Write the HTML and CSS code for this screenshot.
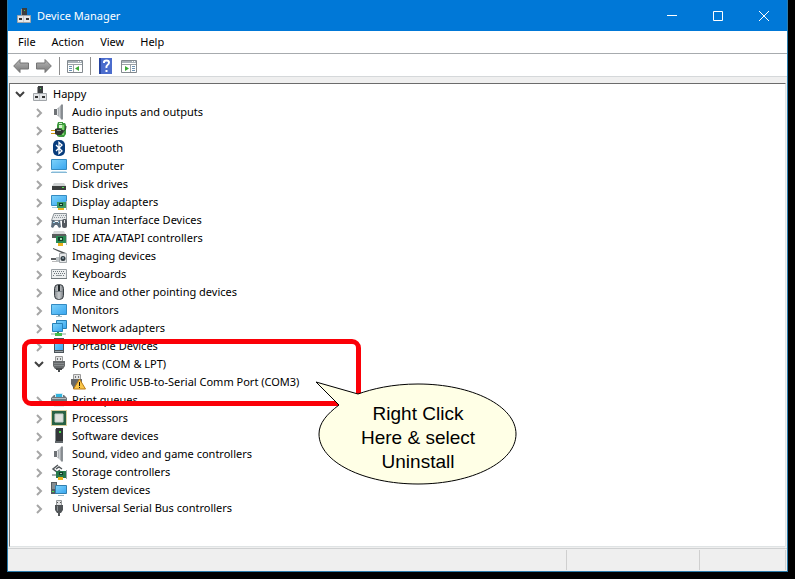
FILE: index.html
```html
<!DOCTYPE html>
<html lang="en">
<head>
<meta charset="utf-8">
<title>Device Manager</title>
<link rel="stylesheet" href="styles.css">
</head>
<body>
<svg class="sprite" aria-hidden="true">
  <defs>
    <linearGradient id="blue" x1="0" y1="0" x2="1" y2="1"><stop offset="0" stop-color="#7fd3fa"/><stop offset="1" stop-color="#37a5f0"/></linearGradient>
    <linearGradient id="metal" x1="0" y1="0" x2="1" y2="0"><stop offset="0" stop-color="#85898d"/><stop offset=".5" stop-color="#c9cdd0"/><stop offset="1" stop-color="#777b80"/></linearGradient>
    <linearGradient id="arrow" x1="0" y1="0" x2="0" y2="1"><stop offset="0" stop-color="#b9b9b9"/><stop offset="1" stop-color="#777"/></linearGradient>
  </defs>
  <symbol id="root" viewBox="0 0 16 16"><path d="M6 0h5v8H6z" fill="#3b3e40"/><path d="M8 2h1v1H8z" fill="#44d04a"/><path d="M5 1h1v7H5z" fill="#999"/><path d="M1.500 7.500h13v7h-13z" fill="#e4e6e8" stroke="#a0a4a8"/><path d="M3 10h3v2H3zM10 10h3v2h-3z" fill="#333"/><path d="M7 8h1v6H7z" fill="#c4c8cb"/></symbol>
  <symbol id="down" viewBox="0 0 16 16"><path d="M4 6l4 4 4-4" fill="none" stroke="#404040" stroke-width="2"/></symbol>
  <symbol id="right" viewBox="0 0 16 16"><path d="M6 5l4 4-4 4" fill="none" stroke="#a6a6a6" stroke-width="2"/></symbol>
  <symbol id="speaker" viewBox="0 0 16 16"><path d="M3 5h3v6H3z" fill="#6e7276"/><path d="M6 5l5-5v16l-5-5z" fill="url(#metal)"/><path d="M11 0l1 1v14l-1 1z" fill="#8b9196"/><path d="M6 5h1v6H6z" fill="#e3e5e7"/></symbol>
  <symbol id="battery" viewBox="0 0 16 16"><path d="M7 0h5v1h2l1 2v9l-2 3H8l-2-1V3z" fill="#3d9a3d"/><path d="M8 1h3v1H8zM8 3h5v3H8z" fill="#d6f0cf"/><path d="M11 3h2v10h-2z" fill="#7bd56b"/><path d="M0 8h5v1H0zM0 11h5v1H0z" fill="#d0980f"/><path d="M4 7l3-1 5 2 1 2-3 3H6l-2-1z" fill="#303531"/><path d="M6 8h4v1H6z" fill="#8d948e"/><path d="M12 9q3 0 3-5" fill="none" stroke="#303531"/></symbol>
  <symbol id="bluetooth" viewBox="0 0 16 16"><rect x="2" width="12" height="16" rx="5" fill="#083c7c"/><path d="M5 5l6 6-3 2.500v-11L11 5l-6 6" fill="none" stroke="#fff" stroke-width="1.300"/></symbol>
  <symbol id="computer" viewBox="0 0 16 16"><path d="M.5 1.500h15v10H.5z" fill="url(#blue)" stroke="#348bc2"/><path d="M1 13h14l1 2H0z" fill="#c3e2f1"/><path d="M0 14h16v1H0z" fill="#85b8d6"/></symbol>
  <symbol id="disk" viewBox="0 0 16 16"><path d="M3 7h10l2 3H1z" fill="#d0d3d4"/><path d="M1 10h14v4H1z" fill="#3a3d3d"/><path d="M11 11h2v1h-2z" fill="#4fe44e"/></symbol>
  <symbol id="display" viewBox="0 0 16 16"><path d="M.5 1.500h15v10H.5z" fill="url(#blue)" stroke="#348bc2"/><path d="M1 13h6v1H1z" fill="#a5cadc"/><path d="M6 8h9v6H6z" fill="#3b9865"/><path d="M8 9h4v3H8z" fill="#123d2b"/><path d="M9 10h2v1H9z" fill="#9cd8ad"/><path d="M15 7h1v9h-1z" fill="#afbbbb"/><path d="M7 14h6v2H7z" fill="#e9b11d"/></symbol>
  <symbol id="hid" viewBox="0 0 16 16"><path d="M3 1.500h12.500v7H.5z" fill="#e6e9eb" stroke="#8b9399"/><path d="M4 3.500h11M3 5.500h12" stroke="#8c959b" stroke-dasharray="1 1"/><path d="M0 15l1-7h2l1 2h3l1-2h1l1 7-2 1-2-3H4l-2 3z" fill="#5c6d7c"/><path d="M2 10h2v1H2zM7 10h1v1H7z" fill="#a6dbf4"/><rect x="11" y="7" width="5" height="9" rx="2" fill="#53595f"/><path d="M13 8h1v3h-1z" fill="#d9dcde"/></symbol>
  <symbol id="ide" viewBox="0 0 16 16"><path d="M3 1h10l2 4H1z" fill="#d6d8d9"/><path d="M1 4h14v4H1z" fill="#5a5d5d"/><path d="M5 6h10v7H5z" fill="#288b54"/><path d="M7 7h5v4H7z" fill="#123d2b"/><path d="M9 8h2v2H9z" fill="#9cd8ad"/><path d="M15 5h1v10h-1z" fill="#afbbbb"/><path d="M7 13h5v3H7z" fill="#e9b11d"/></symbol>
  <symbol id="camera" viewBox="0 0 16 16"><path d="M2 0l13 5v2L2 1z" fill="#505456"/><path d="M0 10h6v2H0z" fill="#5c5f61"/><path d="M5 9h3v5H5z" fill="#bec4c7"/><path d="M1 13h5v1H1z" fill="#bbb"/><path d="M8.500 5.500h7v9h-7z" fill="#e5e7e8" stroke="#a2a7aa"/><circle cx="12" cy="10.500" r="2.500" fill="#303b40"/><circle cx="12" cy="10" r="1" fill="#90a4af"/></symbol>
  <symbol id="keyboard" viewBox="0 0 16 16"><path d="M.5 3.500h15v9H.5z" fill="#edeff0" stroke="#989ea3"/><path d="M0 12h16v1H0z" fill="#70777b"/><path d="M2 5.500h12M3 7.500h11M2 9.500h2M12 9.500h2" fill="none" stroke="#6c757b" stroke-dasharray="1 1"/><path d="M5 9.500h6" stroke="#90979b"/></symbol>
  <symbol id="mouse" viewBox="0 0 16 16"><rect x="3.500" y=".5" width="9" height="15" rx="4" fill="url(#metal)" stroke="#393f44"/><path d="M4 7.500h8" stroke="#7b8389"/><path d="M7 1h2v6H7z" fill="#202629"/></symbol>
  <symbol id="monitor" viewBox="0 0 16 16"><path d="M.5 2.500h15v10H.5z" fill="url(#blue)" stroke="#348bc2"/><path d="M7 13h2v1H7z" fill="#729aac"/><path d="M5 14h6v1H5z" fill="#a9c0c8"/></symbol>
  <symbol id="network" viewBox="0 0 16 16"><path d="M5.500.5h10v8h-10z" fill="url(#blue)" stroke="#2781b7"/><path d="M1.500 3.500h10v8h-10z" fill="url(#blue)" stroke="#2781b7"/><path d="M6 12h2v2H6z" fill="#3a8044"/><path d="M0 13h15v2H0z" fill="#c8d3cf"/><path d="M4 13h7v3H4z" fill="#45bd4f"/></symbol>
  <symbol id="portable" viewBox="0 0 16 16"><path d="M3 0h10v15H3z" fill="#4c545a"/><path d="M4 1h8v11H4z" fill="url(#blue)"/><path d="M4 13h8v1H4z" fill="#9ba3a7"/></symbol>
  <symbol id="port" viewBox="0 0 16 16"><path d="M4.500.5h7v5h-7z" fill="#e2e3e4" stroke="#9a9a9a"/><path d="M6 2h1v2H6zM9 2h1v2H9z" fill="#777"/><path d="M2 5h12v5l-2 3H4l-2-3z" fill="#66696b"/><path d="M3 7h10v1H3zM3 9h10v1H3z" fill="#85898b"/><path d="M5 12h2v2H5zM7 12h2v4H7zM9 12h2v2H9z" fill="#484b4d"/></symbol>
  <symbol id="warnport" viewBox="0 0 16 16"><path d="M3.500.5h7v5h-7z" fill="#e2e3e4" stroke="#9a9a9a"/><path d="M5 2h1v2H5zM8 2h1v2H8z" fill="#777"/><path d="M1 5h11v5l-3 3H3l-2-3z" fill="#66696b"/><path d="M3 13h4v2H3z" fill="#54585a"/><path d="M9.500 5l6 10h-12z" fill="#f9c649" stroke="#b97b18"/><path d="M9 8h1v4H9zM9 13h1v1H9z" fill="#111"/></symbol>
  <symbol id="printer" viewBox="0 0 16 16"><path d="M3 3h10l3 3v6H0V6z" fill="#70777c"/><path d="M4 1h8v4H4z" fill="#d8edf5"/><path d="M5 2h6v3H5z" fill="#32b3dc"/><path d="M1 6h14v1H1z" fill="#b6bdc0"/><path d="M3 9h10v6H3z" fill="#e3edf0"/></symbol>
  <symbol id="cpu" viewBox="0 0 16 16"><path d="M.5.5h15v15H.5z" fill="none" stroke="#b59f3d" stroke-dasharray="1 1"/><path d="M1 1h14v14H1z" fill="#286244"/><path d="M4 4h8v8H4z" fill="#dfe3df" stroke="#c8d0ca"/></symbol>
  <symbol id="software" viewBox="0 0 16 16"><path d="M5 0h7v13H5z" fill="#34373a"/><path d="M4 1h1v12H4z" fill="#8b9195"/><path d="M8 3h2v2H8z" fill="#48dd4b"/><path d="M4 13h8v2H4z" fill="#62686c"/></symbol>
  <symbol id="storage" viewBox="0 0 16 16"><path d="M7 1L2 5l4 3 3-2M5 5l3-2 3 2" fill="none" stroke="#53585b" stroke-width="1.500"/><path d="M1 10h5v2H1z" fill="#a6adaf"/><path d="M5 7h10v7H5z" fill="#26794b"/><path d="M8 8h4v3H8z" fill="#123d2b"/><path d="M9 9h2v1H9z" fill="#9cd8ad"/><path d="M15 6h1v9h-1z" fill="#9ca8a9"/><path d="M7 13h5v3H7z" fill="#e9b11d"/></symbol>
  <symbol id="system" viewBox="0 0 16 16"><path d="M0 0h6v12H0z" fill="#555c62"/><path d="M1 2h4M1 4h4M1 6h3" stroke="#b4bdc2"/><path d="M1 9h2v1H1z" fill="#48dd4b"/><path d="M4.500 3.500h11v8h-11z" fill="url(#blue)" stroke="#327fae"/><path d="M7 13h6v1H7z" fill="#96b5c3"/></symbol>
  <symbol id="usb" viewBox="0 0 16 16"><path d="M5.500.5h5v5h-5z" fill="#e0e1e2" stroke="#95999b"/><path d="M6 2h1v1H6zM9 2h1v1H9z" fill="#555"/><path d="M4 5h8v5l-2 3H6l-2-3z" fill="#505457"/><path d="M6 6h1v5H6z" fill="#888e92"/><path d="M7 12h2v4H7z" fill="#55595b"/></symbol>
  <symbol id="back" viewBox="0 0 16 16"><path d="M.7 8L7 1.500V5h8.500v6H7v3.500z" fill="url(#arrow)" stroke="#747474"/></symbol>
  <symbol id="forward" viewBox="0 0 16 16"><path d="M15.300 8L9 1.500V5H.5v6H9v3.500z" fill="url(#arrow)" stroke="#747474"/></symbol>
  <symbol id="console" viewBox="0 0 16 16"><path d="M.5 2.500h15v12H.5z" fill="#fff" stroke="#82898e"/><path d="M1 3h14v2H1z" fill="#a8b1b8"/><path d="M11 3h1v1h-1zM13 3h1v1h-1z" fill="#fff"/><path d="M1 6.500h14M6.500 7v7" stroke="#9ba2a6"/><path d="M2 8.500h3M2 10.500h3M2 12.500h3" stroke="#6b91b1"/><path d="M12 8v5l-4-2.500z" fill="#39a934"/></symbol>
  <symbol id="actions" viewBox="0 0 16 16"><path d="M.5 2.500h15v12H.5z" fill="#fff" stroke="#82898e"/><path d="M1 3h14v2H1z" fill="#a8b1b8"/><path d="M11 3h1v1h-1zM13 3h1v1h-1z" fill="#fff"/><path d="M1 6.500h14M9.500 7v7" stroke="#9ba2a6"/><path d="M11 8.500h3M11 10.500h3M11 12.500h3" stroke="#6b91b1"/><path d="M4 8v5l4-2.500z" fill="#39a934"/></symbol>
  <symbol id="help" viewBox="0 0 16 16"><path d="M1 0h13v16H1z" fill="#4b6ccd"/><path d="M1 0h2v16H1z" fill="#2644a0"/><path d="M6 5V4q0-1.500 2.500-1.500T11 4.500Q11 6 9.500 7T8.500 10" fill="none" stroke="#fff" stroke-width="2"/><path d="M7.500 12h2v2h-2z" fill="#fff"/></symbol>
</svg>

<main class="window">
  <header class="titlebar">
    <svg class="icon"><use href="#root"/></svg>
    <h1>Device Manager</h1>
    <div class="controls">
      <button aria-label="Minimize"><svg viewBox="0 0 12 12"><path d="M1 5.500h10"/></svg></button>
      <button aria-label="Maximize"><svg viewBox="0 0 12 12"><path d="M1.500 1.500h9v9h-9z"/></svg></button>
      <button aria-label="Close"><svg viewBox="0 0 12 12"><path d="M1 1l10 10M11 1L1 11"/></svg></button>
    </div>
  </header>
  <nav class="menubar"><button>File</button><button>Action</button><button>View</button><button>Help</button></nav>
  <div class="toolbar">
    <button aria-label="Back"><svg class="icon"><use href="#back"/></svg></button>
    <button aria-label="Forward"><svg class="icon"><use href="#forward"/></svg></button>
    <span class="divider"></span>
    <button aria-label="Console tree"><svg class="icon"><use href="#console"/></svg></button>
    <span class="divider"></span>
    <button aria-label="Help"><svg class="icon"><use href="#help"/></svg></button>
    <button aria-label="Action pane"><svg class="icon"><use href="#actions"/></svg></button>
  </div>
  <section class="content">
    <ul class="tree">
      <li><div class="row"><button aria-label="Collapse"><svg class="icon"><use href="#down"/></svg></button><svg class="icon"><use href="#root"/></svg><span>Happy</span></div>
        <ul>
          <li class="row"><button aria-label="Expand"><svg class="icon"><use href="#right"/></svg></button><svg class="icon"><use href="#speaker"/></svg><span>Audio inputs and outputs</span></li>
          <li class="row"><button aria-label="Expand"><svg class="icon"><use href="#right"/></svg></button><svg class="icon"><use href="#battery"/></svg><span>Batteries</span></li>
          <li class="row"><button aria-label="Expand"><svg class="icon"><use href="#right"/></svg></button><svg class="icon"><use href="#bluetooth"/></svg><span>Bluetooth</span></li>
          <li class="row"><button aria-label="Expand"><svg class="icon"><use href="#right"/></svg></button><svg class="icon"><use href="#computer"/></svg><span>Computer</span></li>
          <li class="row"><button aria-label="Expand"><svg class="icon"><use href="#right"/></svg></button><svg class="icon"><use href="#disk"/></svg><span>Disk drives</span></li>
          <li class="row"><button aria-label="Expand"><svg class="icon"><use href="#right"/></svg></button><svg class="icon"><use href="#display"/></svg><span>Display adapters</span></li>
          <li class="row"><button aria-label="Expand"><svg class="icon"><use href="#right"/></svg></button><svg class="icon"><use href="#hid"/></svg><span>Human Interface Devices</span></li>
          <li class="row"><button aria-label="Expand"><svg class="icon"><use href="#right"/></svg></button><svg class="icon"><use href="#ide"/></svg><span>IDE ATA/ATAPI controllers</span></li>
          <li class="row"><button aria-label="Expand"><svg class="icon"><use href="#right"/></svg></button><svg class="icon"><use href="#camera"/></svg><span>Imaging devices</span></li>
          <li class="row"><button aria-label="Expand"><svg class="icon"><use href="#right"/></svg></button><svg class="icon"><use href="#keyboard"/></svg><span>Keyboards</span></li>
          <li class="row"><button aria-label="Expand"><svg class="icon"><use href="#right"/></svg></button><svg class="icon"><use href="#mouse"/></svg><span>Mice and other pointing devices</span></li>
          <li class="row"><button aria-label="Expand"><svg class="icon"><use href="#right"/></svg></button><svg class="icon"><use href="#monitor"/></svg><span>Monitors</span></li>
          <li class="row"><button aria-label="Expand"><svg class="icon"><use href="#right"/></svg></button><svg class="icon"><use href="#network"/></svg><span>Network adapters</span></li>
          <li class="row"><button aria-label="Expand"><svg class="icon"><use href="#right"/></svg></button><svg class="icon"><use href="#portable"/></svg><span>Portable Devices</span></li>
          <li><div class="row"><button aria-label="Collapse"><svg class="icon"><use href="#down"/></svg></button><svg class="icon"><use href="#port"/></svg><span>Ports (COM &amp; LPT)</span></div>
            <ul><li class="row leaf"><svg class="icon"><use href="#warnport"/></svg><span>Prolific USB-to-Serial Comm Port (COM3)</span></li></ul>
          </li>
          <li class="row"><button aria-label="Expand"><svg class="icon"><use href="#right"/></svg></button><svg class="icon"><use href="#printer"/></svg><span>Print queues</span></li>
          <li class="row"><button aria-label="Expand"><svg class="icon"><use href="#right"/></svg></button><svg class="icon"><use href="#cpu"/></svg><span>Processors</span></li>
          <li class="row"><button aria-label="Expand"><svg class="icon"><use href="#right"/></svg></button><svg class="icon"><use href="#software"/></svg><span>Software devices</span></li>
          <li class="row"><button aria-label="Expand"><svg class="icon"><use href="#right"/></svg></button><svg class="icon"><use href="#speaker"/></svg><span>Sound, video and game controllers</span></li>
          <li class="row"><button aria-label="Expand"><svg class="icon"><use href="#right"/></svg></button><svg class="icon"><use href="#storage"/></svg><span>Storage controllers</span></li>
          <li class="row"><button aria-label="Expand"><svg class="icon"><use href="#right"/></svg></button><svg class="icon"><use href="#system"/></svg><span>System devices</span></li>
          <li class="row"><button aria-label="Expand"><svg class="icon"><use href="#right"/></svg></button><svg class="icon"><use href="#usb"/></svg><span>Universal Serial Bus controllers</span></li>
        </ul>
      </li>
    </ul>
    <div class="highlight"></div>
    <aside class="callout">
      <svg viewBox="0 0 202 104" aria-hidden="true"><path d="M1 1L43 13C57 8 77 3 103 3C157 3 201 25 201 53S157 103 103 103S4 81 4 53C4 42 12 33 24 24Z"/></svg>
      <p>Right Click<br>Here &amp; select<br>Uninstall</p>
    </aside>
  </section>
  <footer class="statusbar"><span></span><span></span><span></span></footer>
</main>
</body>
</html>
```
FILE: styles.css
```css
* {
  box-sizing: border-box;
}

body {
  display: flex;
  min-height: 100vh;
  margin: 0;
  padding: 0 7px;
  padding-bottom: 7px;
  background: #000;
  color: #000;
  font: 11px/18px "Noto Sans", "Open Sans", sans-serif;
}

button {
  display: flex;
  align-items: center;
  justify-content: center;
  padding: 0;
  border: 0;
  background: none;
  color: inherit;
  font: inherit;
}

.sprite {
  position: absolute;
  width: 0;
  height: 0;
}

.icon {
  display: block;
  flex: none;
  width: 16px;
  height: 16px;
}

.window {
  display: flex;
  flex: 1;
  flex-direction: column;
  border: 1px solid #2b7cab;
  border-top: 0;
  background: #efefef;
}

.titlebar {
  display: flex;
  align-items: center;
  height: 31px;
  padding-left: 8px;
  background: #0078d7;
  color: #fff;
}

.titlebar h1 {
  flex: 1;
  margin: 0 0 0 5px;
  font: inherit;
}

.controls {
  display: flex;
}

.controls button {
  width: 46px;
  height: 31px;
}

.controls svg {
  width: 12px;
  height: 12px;
  fill: none;
  stroke: #fff;
}

.menubar {
  display: flex;
  height: 23px;
  padding-left: 2px;
  border-bottom: 1px solid #a7abae;
  background: #fff;
}

.menubar button {
  padding: 0 8px;
}

.toolbar {
  display: flex;
  align-items: center;
  gap: 7px;
  height: 23px;
  padding-top: 2px;
  padding-left: 5px;
  border-bottom: 1px solid #d5d8da;
  background: #fff;
}

.divider {
  width: 1px;
  height: 18px;
  background: #8d8d8d;
}

.content {
  position: relative;
  flex: 1;
  margin: 6px 1px 1px;
  border: 1px solid #dfe3e4;
  border-top: 1px solid #6b6b6b;
  border-left: 1px solid #777;
  background: #fff;
}

.tree,
.tree ul {
  margin: 0;
  padding: 0;
  list-style: none;
}

.tree {
  padding: 1px 2px;
}

.tree ul {
  padding-left: 19px;
}

.row {
  display: flex;
  align-items: center;
  height: 18px;
  white-space: nowrap;
}

.row button {
  margin-right: 4px;
}

.row span {
  margin-left: 5px;
}

.leaf {
  padding-left: 20px;
}

.highlight {
  position: absolute;
  top: 255px;
  left: 12px;
  width: 339px;
  height: 67px;
  border: 5px solid #fb0007;
  border-radius: 9px;
}

.callout {
  position: absolute;
  top: 297px;
  left: 305px;
  width: 202px;
  height: 104px;
  font: 19px/24px "Liberation Sans", sans-serif;
  text-align: center;
}

.callout svg {
  display: block;
  fill: #ffffe6;
  stroke: #000;
}

.callout p {
  position: absolute;
  top: 21px;
  left: 4px;
  width: 198px;
  margin: 0;
}

.statusbar {
  display: flex;
  height: 23px;
  padding: 1px;
  border-top: 1px solid #cfd1d2;
}

.statusbar span {
  width: 86px;
  border-right: 1px solid #cfcfcf;
}

.statusbar span:first-child {
  flex: 1;
}

.statusbar span:nth-child(2) {
  width: 133px;
}
```
